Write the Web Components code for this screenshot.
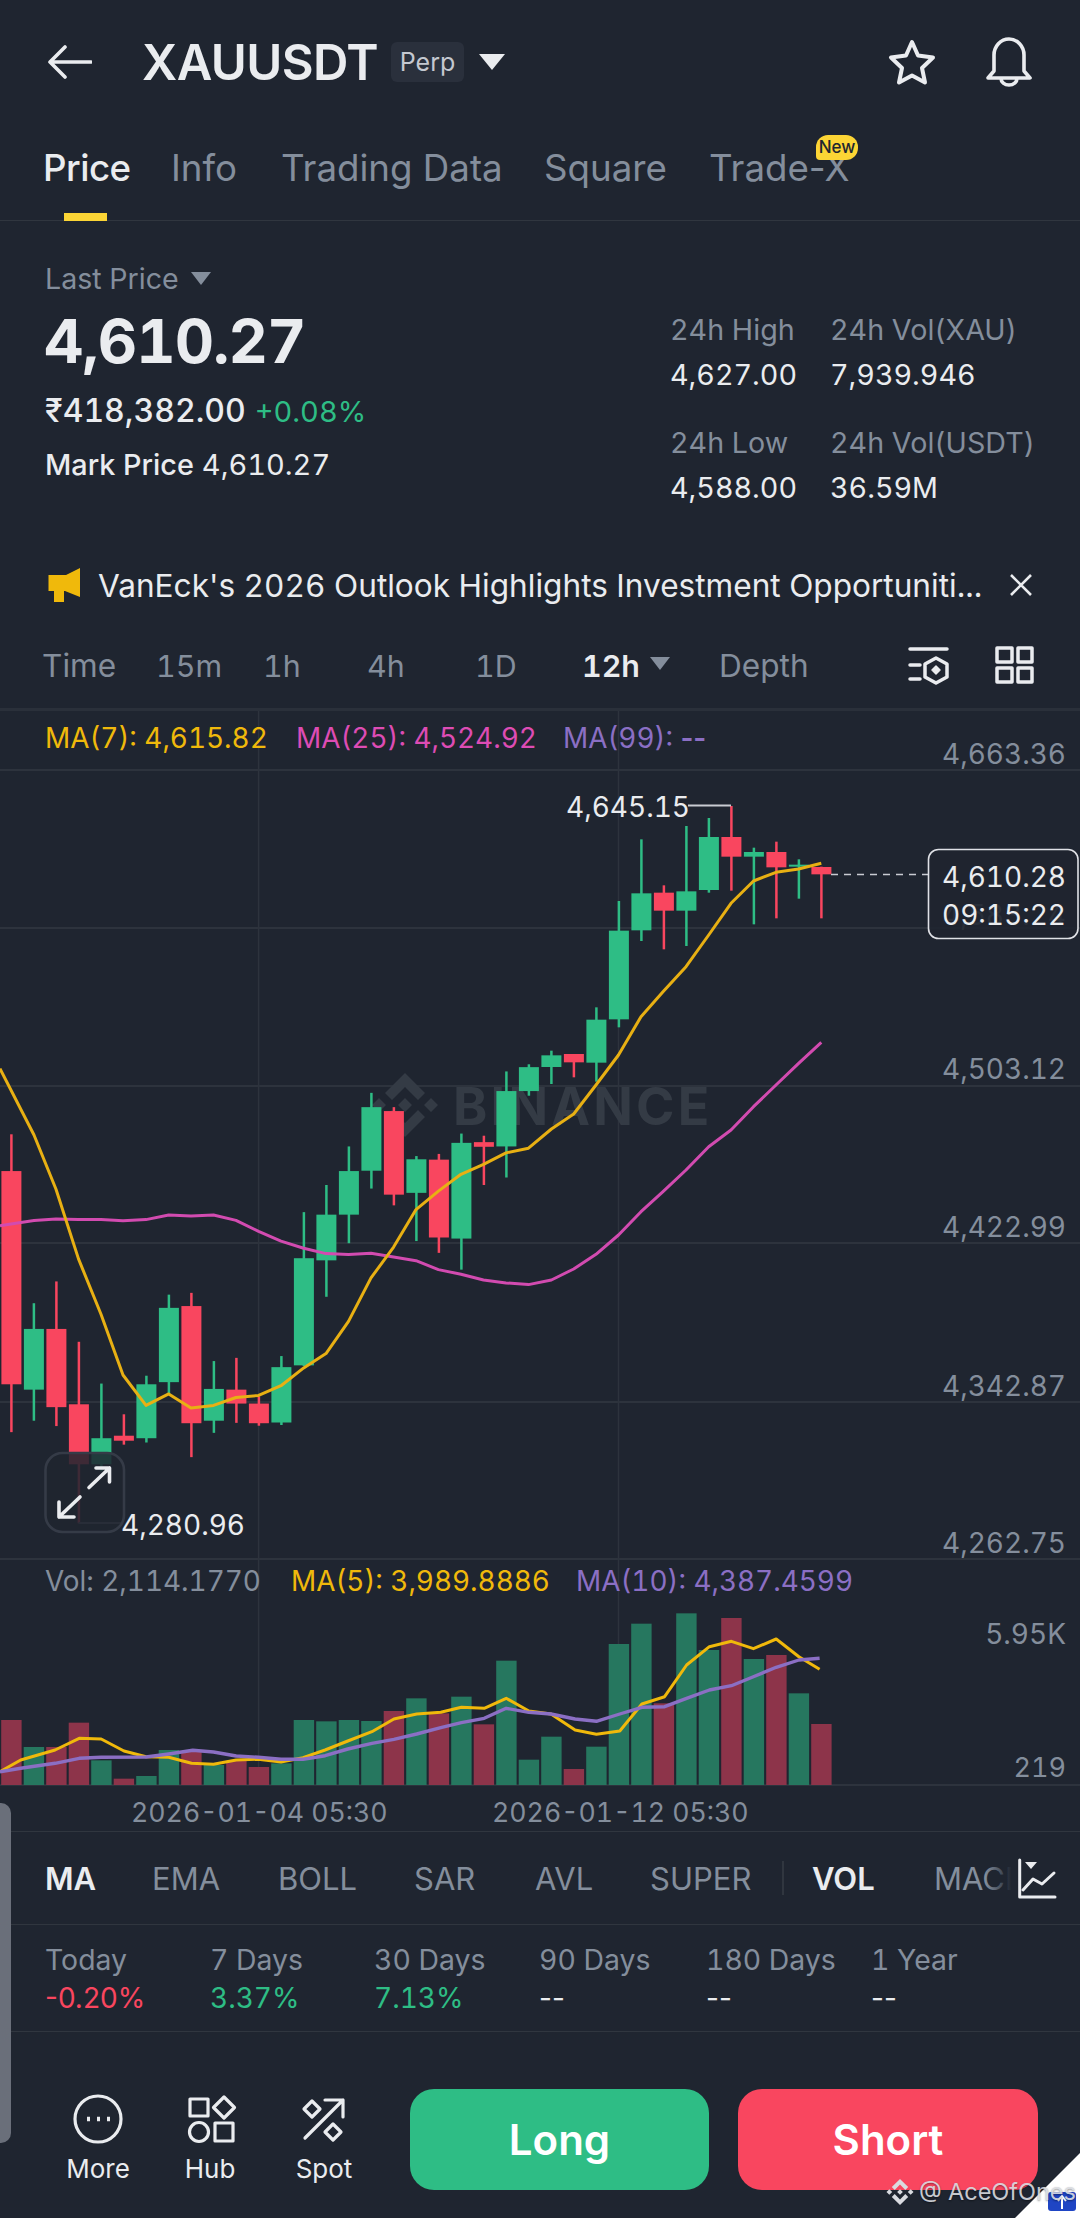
<!DOCTYPE html>
<html>
<head>
<meta charset="utf-8">
<title>XAUUSDT</title>
<style>
  html, body { margin: 0; padding: 0; background: #1f2530; }
  body { width: 1080px; height: 2218px; overflow: hidden; font-family: Inter, "Liberation Sans", sans-serif; color: #eaecef; font-variant-numeric: tabular-nums; }
</style>
</head>
<body>
<app-screen>
  <top-bar symbol="XAUUSDT" kind="Perp"></top-bar>
  <tab-bar>
    <tab-item active>Price</tab-item>
    <tab-item>Info</tab-item>
    <tab-item>Trading Data</tab-item>
    <tab-item>Square</tab-item>
    <tab-item badge="New">Trade-X</tab-item>
  </tab-bar>
  <price-summary></price-summary>
  <news-strip>VanEck's 2026 Outlook Highlights Investment Opportuniti...</news-strip>
  <interval-bar></interval-bar>
  <kline-chart></kline-chart>
  <indicator-bar></indicator-bar>
  <return-stats></return-stats>
  <action-bar></action-bar>
  <screen-overlay></screen-overlay>
</app-screen>

<script>
const GREEN = '#2ebd85';
const RED = '#f9465f';
const LOGO = 'M0 -32L20 -12L13 -5L0 -18L-13 -5L-20 -12ZM0 32L20 12L13 5L0 18L-13 5L-20 12ZM0 -7L7 0L0 7L-7 0ZM-26 -7L-19 0L-26 7L-33 0ZM26 -7L33 0L26 7L19 0Z';

class AppScreen extends HTMLElement {
    connectedCallback() {
        this.attachShadow({ mode: 'open' });
        this.shadowRoot.innerHTML = `
            <style>
                :host { display: flex; flex-direction: column; position: relative; width: 1080px; height: 2218px; overflow: hidden; }
            </style>
            <slot></slot>`;
    }
}

class TopBar extends HTMLElement {
    connectedCallback() {
        this.attachShadow({ mode: 'open' });
        this.shadowRoot.innerHTML = `
            <style>
                :host { display: flex; align-items: center; height: 124px; padding: 0 47px 0 48px; box-sizing: border-box; }
                svg { display: block; fill: none; stroke: #eaecef; stroke-linecap: round; stroke-linejoin: round; }
                .back { margin-right: 50px; }
                .symbol { font-size: 49px; font-weight: 600; letter-spacing: -0.6px; width: 236px; white-space: nowrap; }
                .kind { margin-left: 13px; width: 73px; height: 40px; line-height: 40px; text-align: center; font-size: 25px; color: #c4c8d0; background: #2a303c; border-radius: 6px; }
                .caret { margin-left: 15px; width: 0; height: 0; border-left: 13px solid transparent; border-right: 13px solid transparent; border-top: 16px solid #eaecef; }
                .grow { flex: 1; }
                .star { margin-right: 48px; }
            </style>
            <svg class="back" width="44" height="34" viewBox="0 0 44 34" stroke-width="3.6"><path d="M43 17H3M17 2L2 17L17 32"/></svg>
            <span class="symbol">${this.getAttribute('symbol')}</span>
            <span class="kind">${this.getAttribute('kind')}</span>
            <span class="caret"></span>
            <span class="grow"></span>
            <svg class="star" width="50" height="48" viewBox="0 0 50 48" stroke-width="4"><path d="M25 4L31 17.5L46 19.5L35 30L38 44.5L25 37.5L12 44.5L15 30L4 19.5L19 17.5Z"/></svg>
            <svg width="48" height="50" viewBox="0 0 48 50" stroke-width="3.6"><path d="M3 41L9 34V18A15 16 0 0 1 39 18V34L45 41ZM16 41.5A8 6.5 0 0 0 32 41.5"/></svg>`;
    }
}

class TabBar extends HTMLElement {
    connectedCallback() {
        this.attachShadow({ mode: 'open' });
        this.shadowRoot.innerHTML = `
            <style>
                :host { display: grid; grid-template-columns: 128px 110px 263px 165px 200px; height: 97px; padding-left: 43px; box-sizing: border-box; border-bottom: 1.5px solid #30363f; }
            </style>
            <slot></slot>`;
    }
}

class TabItem extends HTMLElement {
    connectedCallback() {
        this.attachShadow({ mode: 'open' });
        const badge = this.getAttribute('badge');
        this.shadowRoot.innerHTML = `
            <style>
                :host { display: block; position: relative; height: 97px; line-height: 87px; font-size: 36.7px; color: #848e9c; white-space: nowrap; font-variant-numeric: normal; }
                :host([active]) { color: #eaecef; font-weight: 500; letter-spacing: -0.5px; }
                :host([active])::after { content: ""; position: absolute; left: 21px; bottom: 0; width: 43px; height: 8px; background: #fcd535; }
                .badge { position: absolute; left: 107px; top: 11px; width: 42px; height: 25px; line-height: 25px; text-align: center; font-size: 17px; font-weight: 500; color: #202630; background: #fcd535; border-radius: 12px 12px 12px 4px; }
            </style>
            <slot></slot>${badge ? `<span class="badge">${badge}</span>` : ''}`;
    }
}

class StatCell extends HTMLElement {
    connectedCallback() {
        this.attachShadow({ mode: 'open' });
        this.shadowRoot.innerHTML = `
            <style>
                :host { display: block; font-size: 28.7px; line-height: 40px; white-space: nowrap; }
                .label { color: #848e9c; margin-bottom: 5px; }
            </style>
            <div class="label">${this.getAttribute('label')}</div>
            <slot></slot>`;
    }
}

class PriceSummary extends HTMLElement {
    connectedCallback() {
        this.attachShadow({ mode: 'open' });
        this.shadowRoot.innerHTML = `
            <style>
                :host { display: flex; justify-content: space-between; height: 319px; padding-left: 45px; box-sizing: border-box; }
                .last { display: flex; align-items: center; margin-top: 39px; height: 36px; font-size: 28.6px; color: #848e9c; }
                .last i { margin-left: 12px; width: 0; height: 0; border-left: 10px solid transparent; border-right: 10px solid transparent; border-top: 13px solid #848e9c; }
                .price { margin-top: 10px; margin-left: -1px; font-size: 61px; line-height: 70px; font-weight: 700; letter-spacing: -1px; }
                .fiat { margin-top: 15px; font-size: 32px; font-weight: 500; line-height: 40px; }
                .fiat b { font-weight: 400; font-size: 29px; color: ${GREEN}; margin-left: 9px; }
                .mark { margin-top: 13px; font-size: 28.8px; line-height: 40px; font-weight: 500; }
                .mark span { margin-left: 8px; font-weight: 400; font-size: 29px; }
                .right { display: grid; grid-template-columns: 160px 217px; row-gap: 28px; align-content: start; padding-top: 89px; margin-right: 33px; }
            </style>
            <div>
                <div class="last">Last Price<i></i></div>
                <div class="price">4,610.27</div>
                <div class="fiat">₹418,382.00<b>+0.08%</b></div>
                <div class="mark">Mark Price<span>4,610.27</span></div>
            </div>
            <div class="right">
                <stat-cell label="24h High">4,627.00</stat-cell>
                <stat-cell label="24h Vol(XAU)">7,939.946</stat-cell>
                <stat-cell label="24h Low">4,588.00</stat-cell>
                <stat-cell label="24h Vol(USDT)">36.59M</stat-cell>
            </div>`;
    }
}

class NewsStrip extends HTMLElement {
    connectedCallback() {
        this.attachShadow({ mode: 'open' });
        this.shadowRoot.innerHTML = `
            <style>
                :host { display: flex; align-items: center; height: 90px; padding-left: 48px; box-sizing: border-box; font-size: 31.6px; white-space: nowrap; }
                .text { margin-left: 17px; width: 911px; overflow: hidden; }
                svg { display: block; }
            </style>
            <svg width="33" height="36" viewBox="49 566 33 36"><path fill="#f0b90b" d="M49.5 574H67L81 567V596L66 590H65V601H55V590H49.5Z"/></svg>
            <span class="text"><slot></slot></span>
            <svg width="24" height="24" viewBox="0 0 24 24" fill="none" stroke="#eaecef" stroke-width="2.6"><path d="M2 2L22 22M22 2L2 22"/></svg>`;
    }
}

class IntervalBar extends HTMLElement {
    connectedCallback() {
        this.attachShadow({ mode: 'open' });
        this.shadowRoot.innerHTML = `
            <style>
                :host { display: grid; grid-template-columns: 114px 107px 104px 108px 107px 137px 189px 87px auto; align-items: center; height: 81px; padding: 0 0 7px 42px; box-sizing: border-box; border-bottom: 3px solid #2a303a; font-size: 31.6px; color: #848e9c; white-space: nowrap; }
                .n { font-size: 30.4px; }
                .on { display: flex; align-items: center; color: #eaecef; font-weight: 600; }
                .on i { margin-left: 10px; margin-bottom: 4px; width: 0; height: 0; border-left: 10px solid transparent; border-right: 10px solid transparent; border-top: 13px solid #848e9c; }
                svg { display: block; fill: none; stroke: #eaecef; stroke-width: 3.5; stroke-linecap: round; stroke-linejoin: round; }
            </style>
            <span>Time</span><span class="n">15m</span><span class="n">1h</span><span class="n">4h</span><span class="n">1D</span>
            <span class="on n">12h<i></i></span>
            <span>Depth</span>
            <svg width="42" height="40" viewBox="908 648 42 40"><path d="M910 651H947M910 667H920M910 681H920M936 660L947 666V679L936 685L925 679V666Z"/><path d="M936 668L940 672L936 676L932 672Z" fill="#eaecef" stroke-width="1.5"/></svg>
            <svg width="40" height="40" viewBox="996 647 40 40"><path d="M998 649H1013V663H998ZM1019 649H1033V663H1019ZM998 669H1013V683H998ZM1019 669H1033V683H1019Z"/></svg>`;
    }
}

class KlineChart extends HTMLElement {
    connectedCallback() {
        this.attachShadow({ mode: 'open' });
        this.shadowRoot.innerHTML = `
            <style>
                :host { display: block; height: 1120px; border-bottom: 1.5px solid #30363f; box-sizing: content-box; }
                svg { display: block; font-family: Inter, "Liberation Sans", sans-serif; }
            </style>
            <svg width="1080" height="1120" viewBox="0 711 1080 1120">${this.drawing()}</svg>`;
    }

    drawing() {
        const cx = i => 11.4 + 22.5 * i;
        const a = v => 1000 + v / 2.8;   // first half of the candles, read off one crop
        const b = v => 760 + v / 3;      // second half
        const up = [
            [376, 479, 1076, 1210, 0], [849, 921, 1091, 1178, 1], [788, 921, 1140, 1193, 0], [957, 1132, 1300, 1465, 0],
            [1074, 1227, 1300, 1320, 1], [1160, 1220, 1234, 1245, 0], [1052, 1076, 1227, 1239, 1], [825, 862, 1070, 1105, 1],
            [820, 857, 1185, 1280, 0], [1011, 1089, 1178, 1212, 1], [1002, 1091, 1130, 1184, 0], [1110, 1130, 1185, 1192, 0],
            [997, 1028, 1183, 1190, 1], [594, 723, 1023, 1025, 1], [518, 601, 729, 831, 1], [410, 479, 601, 681, 1],
            [260, 300, 478, 528, 1], [300, 311, 545, 575, 0], [437, 446, 540, 675, 1], [431, 447, 665, 708, 0],
            [374, 400, 668, 755, 1], [380, 398, 411, 518, 0], [200, 255, 410, 497, 1], [180, 188, 255, 268, 1]
        ].map(c => [a(c[0]), a(c[1]), a(c[2]), a(c[3]), c[4]]);
        const down = [
            [872, 886, 921, 972, 1], [882, 882, 907, 952, 0], [742, 779, 908, 965, 1], [423, 512, 778, 802, 1],
            [238, 400, 511, 543, 1], [376, 398, 452, 568, 0], [198, 394, 452, 558, 1], [174, 231, 390, 398, 1],
            [138, 231, 290, 392, 0], [263, 276, 290, 493, 1], [245, 276, 322, 475, 0], [298, 314, 320, 416, 1],
            [320, 321, 343, 475, 0]
        ].map(c => [b(c[0]), b(c[1]), b(c[2]), b(c[3]), c[4]]);
        const candles = up.concat(down);

        let out = '';
        // grid
        [770, 928, 1086, 1243, 1402, 1559].forEach(y => { out += `<path d="M0 ${y}H1080" stroke="#2d333d" stroke-width="2"/>`; });
        out += `<path d="M258.6 711V1785M618.5 711V1785" stroke="#2d333d" stroke-width="1.5"/>`;
        out += `<path d="M0 1785H1080" stroke="#2d333d" stroke-width="2"/>`;

        // watermark
        out += `<path transform="translate(405 1105)" fill="#343b45" d="${LOGO}"/>`;
        out += `<text x="453" y="1125" font-size="52" font-weight="700" letter-spacing="3.2" fill="#343b45">BINANCE</text>`;

        // candles
        candles.forEach((c, i) => {
            const col = c[4] ? GREEN : RED;
            out += `<rect x="${cx(i) - 1.25}" y="${c[0]}" width="2.5" height="${c[3] - c[0]}" fill="${col}"/>`;
            out += `<rect x="${cx(i) - 10}" y="${c[1]}" width="20" height="${Math.max(c[2] - c[1], 2)}" fill="${col}"/>`;
        });

        // MA lines on the candles
        const ma7 = [[0, a(192)], [34, a(378)], [56, a(530)], [78.5, a(725)], [101, a(880)], [123, a(1050)], [146, a(1135)], [168.7, a(1103)], [191, a(1142)], [213.5, a(1135)], [236, a(1113)], [258.6, a(1107)], [281, a(1080)], [303.7, a(1030)], [326, a(990)], [348.5, a(900)], [371, a(778)], [393.6, a(692)], [416, a(587)], [438.4, a(535)], [461, a(488)], [483.5, a(460)], [506, a(428)], [528.5, a(415)], [551.4, b(1107)], [573.7, b(1062)], [596, b(975)], [618.5, b(885)], [641, b(770)], [663, b(695)], [686, b(620)], [708.7, b(525)], [731, b(430)], [753.5, b(363)], [776, b(337)], [798.6, b(327)], [821.3, b(310)]];
        const ma25 = [[0, a(632)], [11, a(627)], [34, a(617)], [56, a(613)], [78.5, a(615)], [101, a(615)], [123, a(618)], [146, a(615)], [168.7, a(602)], [191, a(605)], [213.5, a(602)], [236, a(617)], [258.6, a(648)], [281, a(675)], [303.7, a(695)], [326, a(710)], [348.5, a(713)], [371, a(709)], [393.6, a(720)], [416, a(730)], [438.4, a(755)], [461, a(768)], [483.5, a(784)], [506, a(792)], [528.5, a(797)], [551.4, 1280], [573.7, 1269], [596, b(1483)], [618.5, b(1425)], [641, b(1355)], [663, b(1295)], [686, b(1230)], [708.7, b(1160)], [731, b(1110)], [753.5, b(1040)], [776, b(975)], [798.6, b(910)], [821.3, b(847)]];
        const line = (pts, col, w) => `<polyline fill="none" stroke="${col}" stroke-width="${w}" stroke-linejoin="round" points="${pts.map(p => p[0].toFixed(1) + ',' + p[1].toFixed(1)).join(' ')}"/>`;
        out += line(ma25, '#d24bb0', 3) + line(ma7, '#e8b013', 3);

        // legend
        out += this.label(45, 748, 'MA(7): 4,615.82', '#f0b90b', 27.9);
        out += this.label(296, 748, 'MA(25): 4,524.92', '#dd4cb4', 27.9);
        out += this.label(563, 748, 'MA(99): <tspan style="font-variant-numeric: normal" font-weight="600">--</tspan>', '#8b6fc4', 27.9);

        // price axis
        [[764, '4,663.36'], [1079, '4,503.12'], [1237, '4,422.99'], [1396, '4,342.87'], [1553, '4,262.75']].forEach(t => {
            out += `<text x="1066" y="${t[0]}" text-anchor="end" font-size="28" fill="#848e9c">${t[1]}</text>`;
        });
        out += `<text x="1066" y="925" text-anchor="end" font-size="28" fill="#848e9c">4,583.24</text>`;

        // high / low marks
        out += `<path d="M688 805.6H731" stroke="#c9ccd2" stroke-width="2" fill="none"/>`;
        out += `<text x="566" y="817" font-size="28" fill="#eaecef">4,645.15</text>`;
        out += `<path d="M78.5 1523H122" stroke="#5a606b" stroke-width="2" fill="none"/>`;

        // live price box
        out += `<path d="M831 874.5H928" stroke="#c9ccd2" stroke-width="1.6" stroke-dasharray="7 6" fill="none"/>`;
        out += `<rect x="928.5" y="849.5" width="149.5" height="89" rx="10" fill="#1f2530" fill-opacity=".9" stroke="#dfe1e6" stroke-width="1.6"/>`;
        out += `<text x="1066" y="887" text-anchor="end" font-size="28" fill="#eaecef">4,610.28</text>`;
        out += `<text x="1066" y="925" text-anchor="end" font-size="28" fill="#eaecef">09:15:22</text>`;

        // expand button
        out += `<rect x="45.5" y="1453" width="78.5" height="79" rx="17" fill="#1f2530" fill-opacity=".86" stroke="#353b47" stroke-width="2.6"/>`;
        out += `<path d="M89 1487.5L109.5 1468M96 1468H109.5V1482M80 1497L59 1517M59 1502V1517H74" fill="none" stroke="#eaecef" stroke-width="3.6" stroke-linecap="round" stroke-linejoin="round"/>`;
        out += `<text x="121" y="1535" font-size="28" fill="#eaecef">4,280.96</text>`;

        out += this.volume();
        return out;
    }

    label(x, y, text, col, size) {
        return `<text x="${x}" y="${y}" font-size="${size}" fill="${col}">${text}</text>`;
    }

    volume() {
        const base = 1785;
        const y = v => 1550 + v / 3;
        const x = v => v / 1.452;
        const tops = [[510, 0], [591, 1], [591, 0], [518, 0], [631, 1], [686, 0], [678, 1], [600, 1], [605, 0], [645, 1], [632, 0], [651, 0], [640, 1], [510, 1], [514, 1], [510, 1], [513, 1], [483, 0], [445, 1], [490, 0], [440, 1], [523, 0], [332, 1], [629, 1], [560, 1], [657, 0], [590, 1], [282, 1], [221, 1], [460, 0], [190, 1], [300, 1], [204, 0], [327, 1], [315, 0], [430, 1], [522, 0]];
        let out = '';
        tops.forEach((t, i) => {
            const left = 11.4 + 22.5 * i - 10.2;
            out += `<rect x="${left}" y="${y(t[0])}" width="20.4" height="${base - y(t[0])}" fill="${t[1] ? '#26775f' : '#8d344a'}"/>`;
        });
        const ma5 = [[0, 665], [30, 630], [80, 600], [115, 565], [147, 567], [180, 603], [212, 620], [245, 622], [278, 640], [310, 643], [343, 630], [375, 628], [408, 636], [440, 623], [472, 600], [505, 573], [540, 545], [572, 507], [605, 492], [640, 487], [670, 472], [703, 475], [735, 445], [768, 483], [800, 492], [835, 540], [866, 553], [900, 543], [932, 462], [965, 440], [997, 345], [1030, 290], [1062, 274], [1094, 296], [1127, 267], [1160, 320], [1190, 358]];
        const ma10 = [[0, 665], [30, 655], [80, 640], [115, 625], [147, 622], [212, 621], [245, 612], [280, 601], [310, 606], [343, 618], [375, 622], [408, 628], [440, 628], [472, 617], [505, 597], [540, 580], [572, 568], [605, 552], [640, 533], [670, 518], [703, 505], [735, 475], [768, 487], [800, 492], [835, 507], [866, 514], [900, 492], [932, 472], [965, 470], [997, 445], [1030, 420], [1062, 407], [1094, 380], [1127, 352], [1160, 330], [1190, 325]];
        const pl = (pts, col, w) => `<polyline fill="none" stroke="${col}" stroke-width="${w}" stroke-linejoin="round" points="${pts.map(p => x(p[0]).toFixed(1) + ',' + y(p[1]).toFixed(1)).join(' ')}"/>`;
        out += pl(ma5, '#f0b90b', 3) + pl(ma10, '#8b6fc4', 3.4);

        out += this.label(45, 1591, 'Vol: 2,114.1770', '#848e9c', 27.9);
        out += this.label(291, 1591, 'MA(5): 3,989.8886', '#f0b90b', 27.9);
        out += this.label(576, 1591, 'MA(10): 4,387.4599', '#8b6fc4', 27.9);
        out += `<text x="1066" y="1644" text-anchor="end" font-size="28" fill="#848e9c">5.95K</text>`;
        out += `<text x="1066" y="1777" text-anchor="end" font-size="27" fill="#848e9c">219</text>`;
        out += `<text x="131" y="1822" font-size="26.7" fill="#848e9c">2026-01-04 05:30</text>`;
        out += `<text x="492" y="1822" font-size="26.7" fill="#848e9c">2026-01-12 05:30</text>`;
        return out;
    }
}

class IndicatorBar extends HTMLElement {
    connectedCallback() {
        this.attachShadow({ mode: 'open' });
        this.shadowRoot.innerHTML = `
            <style>
                :host { display: grid; grid-template-columns: 107px 126px 136px 121px 115px 162px 122px auto; align-items: center; position: relative; height: 93px; padding-left: 45px; box-sizing: border-box; overflow: hidden; border-bottom: 1.5px solid #30363f; font-size: 31px; color: #848e9c; white-space: nowrap; }
                .on { color: #eaecef; font-weight: 600; }
                .sep { position: absolute; left: 782px; top: 29px; width: 1.5px; height: 34px; background: #30363f; }
                .fade { position: absolute; left: 985px; top: 0; width: 95px; height: 92px; background: linear-gradient(90deg, rgba(31,37,48,0), #1f2530 28%); }
                svg { position: absolute; left: 1016px; top: 26px; fill: none; stroke: #eaecef; stroke-width: 3; stroke-linecap: round; stroke-linejoin: round; }
            </style>
            <span class="on">MA</span><span>EMA</span><span>BOLL</span><span>SAR</span><span>AVL</span><span>SUPER</span>
            <span class="on">VOL</span><span>MACD</span>
            <i class="sep"></i>
            <i class="fade"></i>
            <svg width="44" height="42" viewBox="1016 1857 44 42"><path d="M1019.7 1859V1896H1055M1023 1889L1033 1878L1042 1883L1054 1872"/><path d="M1025 1861H1037L1031 1868Z" fill="#eaecef" stroke="none"/></svg>`;
    }
}

class ReturnStats extends HTMLElement {
    connectedCallback() {
        this.attachShadow({ mode: 'open' });
        const rows = [['Today', '-0.20%', RED], ['7 Days', '3.37%', GREEN], ['30 Days', '7.13%', GREEN], ['90 Days', '--', '#eaecef'], ['180 Days', '--', '#eaecef'], ['1 Year', '--', '#eaecef']];
        this.shadowRoot.innerHTML = `
            <style>
                :host { display: grid; grid-template-columns: 165px 164px 165px 167px 165px 1fr; height: 107px; padding: 16px 0 0 45px; box-sizing: border-box; border-bottom: 1.5px solid #30363f; white-space: nowrap; font-size: 28.4px; }
                .k { color: #848e9c; line-height: 38px; }
                .v { line-height: 38px; font-size: 28px; }
                .dash { font-variant-numeric: normal; }
            </style>
            ${rows.map(r => `<div><div class="k">${r[0]}</div><div class="v${r[1].startsWith('-') ? ' dash' : ''}" style="color:${r[2]}">${r[1]}</div></div>`).join('')}`;
    }
}

class NavAction extends HTMLElement {
    connectedCallback() {
        this.attachShadow({ mode: 'open' });
        this.shadowRoot.innerHTML = `
            <style>
                :host { display: flex; flex-direction: column; align-items: center; font-size: 26px; line-height: 40px; color: #eaecef; }
                ::slotted(svg) { display: block; fill: none; stroke: #eaecef; stroke-width: 3.2; stroke-linecap: round; stroke-linejoin: round; }
            </style>
            <slot></slot>
            <span>${this.getAttribute('label')}</span>`;
    }
}

class TradeButton extends HTMLElement {
    connectedCallback() {
        this.attachShadow({ mode: 'open' });
        const bg = this.getAttribute('kind') === 'long' ? GREEN : RED;
        this.shadowRoot.innerHTML = `
            <style>
                :host { display: flex; align-items: center; justify-content: center; height: 101px; border-radius: 24px; background: ${bg}; color: #fff; font-size: 42px; font-weight: 600; }
            </style>
            <slot></slot>`;
    }
}

class ActionBar extends HTMLElement {
    connectedCallback() {
        this.attachShadow({ mode: 'open' });
        this.shadowRoot.innerHTML = `
            <style>
                :host { display: grid; grid-template-columns: 112px 112px 114px 299px 300px; column-gap: 0; align-items: start; padding: 57px 0 0 42px; box-sizing: border-box; flex: 1; }
                nav-action:nth-of-type(3) { margin-left: 2px; }
                .long { margin-left: 30px; width: 299px; }
                .short { margin-left: 59px; width: 300px; }
            </style>
            <nav-action label="More"><svg width="60" height="60" viewBox="68 2089 60 60"><circle cx="98" cy="2119" r="23"/><path d="M87 2119H90M97 2119H100M107 2119H110" stroke-width="4.6" stroke-linecap="butt"/></svg></nav-action>
            <nav-action label="Hub"><svg width="60" height="60" viewBox="180 2089 60 60"><path d="M190 2099H208V2116H190ZM224 2097L234.5 2107.5L224 2118L213.5 2107.5ZM215 2123H233V2141H215Z"/><circle cx="199" cy="2132" r="9.5"/></svg></nav-action>
            <nav-action label="Spot"><svg width="60" height="60" viewBox="294 2089 60 60"><path d="M305 2138L343 2100M325 2100H343V2117M312 2101L320 2109L312 2117L304 2109ZM333 2124L341 2132L333 2140L325 2132Z"/></svg></nav-action>
            <trade-button class="long" kind="long">Long</trade-button>
            <trade-button class="short" kind="short">Short</trade-button>`;
    }
}

class ScreenOverlay extends HTMLElement {
    connectedCallback() {
        this.attachShadow({ mode: 'open' });
        this.shadowRoot.innerHTML = `
            <style>
                :host { display: block; position: absolute; inset: 0; pointer-events: none; }
                .handle { position: absolute; left: 0; top: 1803px; width: 11px; height: 340px; background: #6a6f7a; border-radius: 0 10px 10px 0; }
                svg { position: absolute; left: 880px; top: 2150px; }
                .mark { position: absolute; left: 919px; top: 2174px; font-size: 23.5px; line-height: 36px; color: #d9dbe0; text-shadow: 0 1px 2px rgba(0,0,0,.45); white-space: nowrap; opacity: .9; }
            </style>
            <div class="handle"></div>
            <svg width="200" height="68" viewBox="880 2150 200 68">
                <path d="M1080 2153L1015 2218H1080Z" fill="#fff"/>
                <rect x="1048" y="2192" width="28" height="19" rx="3" fill="#1f45c4"/>
                <path d="M1062 2209V2198M1058 2201L1062 2196L1066 2201" stroke="#fff" stroke-width="2" fill="none"/>
                <path transform="translate(900 2192) scale(.41)" fill="#d9dbe0" d="${LOGO}"/>
            </svg>
            <span class="mark">@ AceOfOnes</span>`;
    }
}

customElements.define('app-screen', AppScreen);
customElements.define('top-bar', TopBar);
customElements.define('tab-bar', TabBar);
customElements.define('tab-item', TabItem);
customElements.define('stat-cell', StatCell);
customElements.define('price-summary', PriceSummary);
customElements.define('news-strip', NewsStrip);
customElements.define('interval-bar', IntervalBar);
customElements.define('kline-chart', KlineChart);
customElements.define('indicator-bar', IndicatorBar);
customElements.define('return-stats', ReturnStats);
customElements.define('nav-action', NavAction);
customElements.define('trade-button', TradeButton);
customElements.define('action-bar', ActionBar);
customElements.define('screen-overlay', ScreenOverlay);
</script>
</body>
</html>
